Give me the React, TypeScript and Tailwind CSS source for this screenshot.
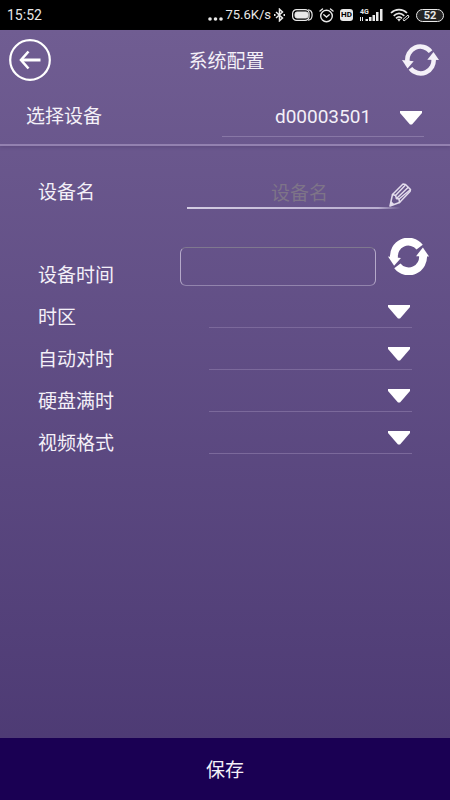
import { useState } from "react";

const settings = [
  { id: "timezone", label: "时区" },
  { id: "auto-sync", label: "自动对时" },
  { id: "disk-full", label: "硬盘满时" },
  { id: "video-format", label: "视频格式" },
];

function RefreshIcon({ className, weight }: { className: string; weight: number }) {
  return (
    <svg viewBox="0 0 114 98" className={className} aria-hidden="true">
      <g fill="none" stroke="currentColor" strokeWidth={weight}>
        <path d="M17 54A40 40 0 0 1 88 23" />
        <path d="M97 44A40 40 0 0 1 26 75" />
      </g>
      <path d="M0 49L36 53L17 75Z" fill="currentColor" />
      <path d="M114 49L78 48L97 24Z" fill="currentColor" />
    </svg>
  );
}

function Caret() {
  return (
    <svg viewBox="0 0 22 14" className="pointer-events-none col-start-1 row-start-1 mr-0.5 h-3.5 w-[22px] self-center justify-self-end" aria-hidden="true">
      <path d="M0 0H22V2L12 13.5H10L0 2Z" fill="#fff" />
    </svg>
  );
}

function PencilIcon() {
  return (
    <svg viewBox="0 0 24 24" className="pointer-events-none col-start-1 row-start-1 size-6 self-end justify-self-end" aria-hidden="true">
      <g fill="none" stroke="#e3dcec" strokeWidth="1.5" strokeLinejoin="round" strokeLinecap="round">
        <path d="M2 23L4.500 11.500L15 1L17.500 1.500L22.500 6.500L22 8.500L11.500 19.500L2 23Z" />
        <path d="M4.500 11.500L7.500 12.500L8.500 15.500L11 16L11.500 19.500" />
        <path d="M7.500 12.500L17 2.500M8.500 15.500L20 4.500M11 16L22 7" />
      </g>
      <path d="M2 23L3 18L6.500 21.300Z" fill="#e3dcec" />
    </svg>
  );
}

function StatusBar() {
  return (
    <div className="flex h-[30px] items-center justify-between bg-black pl-[7px] pr-1.5 font-[Roboto,sans-serif] text-[#e8e8e8]">
      <span className="text-sm">15:52</span>
      <div className="flex items-center gap-1.5">
        <div className="flex items-center gap-0.5">
          <svg viewBox="0 0 15 14" className="h-3.5 w-[15px]" fill="currentColor" aria-hidden="true">
            <circle cx="2" cy="11" r="1.800" />
            <circle cx="7.500" cy="11" r="1.800" />
            <circle cx="13" cy="11" r="1.800" />
          </svg>
          <span className="text-[13px]">75.6K/s</span>
          <svg viewBox="0 0 13 14" className="h-3.5 w-[13px]" fill="none" stroke="currentColor" strokeWidth="1.5" aria-hidden="true">
            <path d="M3 4L9.500 10L6.500 12.800V1.200L9.500 4L3 10" />
            <path d="M1 7H2.500M10.500 7H12" strokeWidth="2" />
          </svg>
        </div>
        <svg viewBox="0 0 21 12" className="h-3 w-[21px]" fill="none" stroke="currentColor" aria-hidden="true">
          <rect x="0.600" y="0.600" width="16.500" height="10.800" rx="4" strokeWidth="1.200" />
          <rect x="3" y="3" width="13" height="6" rx="2" fill="currentColor" />
          <path d="M16 0.800C21.500 1 21.500 11 16 11.200" strokeWidth="1.200" />
        </svg>
        <svg viewBox="0 0 15 15" className="size-[15px]" fill="none" stroke="currentColor" strokeWidth="1.4" strokeLinecap="round" aria-hidden="true">
          <circle cx="7.500" cy="8" r="5.800" />
          <path d="M4.800 6.800L7.500 9L10.200 6.800M1 3L3.500 1M14 3L11.500 1" />
        </svg>
        <span className="flex h-3 w-[13px] items-center justify-center rounded-[3px] bg-[#e8e8e8] text-[8px] font-bold text-black">HD</span>
        <svg viewBox="0 0 25 14" className="h-3.5 w-[25px]" fill="currentColor" aria-hidden="true">
          <text x="1" y="5.500" fontSize="7" fontWeight="700">4G</text>
          <path d="M1 9H2V13H1ZM3 9H4V13H3ZM6.500 11H9V13H6.500ZM10 9H12.500V13H10ZM13.500 7H16V13H13.500ZM17 4H19.500V13H17ZM21 1H23.500V13H21Z" />
        </svg>
        <svg viewBox="0 0 20 14" className="h-3.5 w-5" fill="none" stroke="currentColor" strokeWidth="1.700" aria-hidden="true">
          <path d="M1 5C5.500 0.600 12.500 0.600 17 5M3.700 7.800C7 4.800 11 4.800 14.300 7.800M6 10.300C8 8.500 10 8.500 12 10.300" />
          <path d="M7.500 11H10.500L9 13.300Z" fill="currentColor" strokeWidth="0.500" />
          <path d="M13 11.500L18 7L19 9L14 13Z" strokeWidth="1" />
        </svg>
        <span className="flex h-[13px] w-7 items-center justify-center rounded-full border border-[#e8e8e8] bg-[#242424] text-[11px] font-bold leading-none">52</span>
      </div>
    </div>
  );
}

export default function App() {
  const [name, setName] = useState("");
  const [time, setTime] = useState("");

  return (
    <div className="flex min-h-screen flex-col bg-black font-['Noto_Sans_CJK_SC',sans-serif]">
      <StatusBar />

      <form
        className="flex flex-1 flex-col bg-linear-to-b from-[#705d92] to-[#4b3872] text-[19px] text-[#f4f0f8]"
        onSubmit={(e) => e.preventDefault()}
      >
        <header className="border-b-2 border-[#9381b0] shadow-[0_2px_3px_#4f3d7055]">
          <div className="flex h-[60px] items-center justify-between pl-[9px] pr-[11px]">
            <button type="button" aria-label="返回">
              <svg viewBox="0 0 42 42" className="size-[42px]" fill="none" stroke="#fff" aria-hidden="true">
                <circle cx="21" cy="21" r="19.800" strokeWidth="2.200" />
                <path d="M12 21H31.500" strokeWidth="3" />
                <path d="M19.500 12.500L12 21L19.500 29.500" strokeWidth="2.600" />
              </svg>
            </button>
            <h1>系统配置</h1>
            <button type="button" aria-label="刷新">
              <RefreshIcon className="h-8 w-[37px]" weight={14} />
            </button>
          </div>
          <div className="flex h-[54px] items-start px-[26px] pt-[9px]">
            <label htmlFor="device" className="w-[196px] leading-8">选择设备</label>
            <div className="grid flex-1">
              <select
                id="device"
                className="col-start-1 row-start-1 h-[38px] appearance-none border-b border-[#8877a6] bg-transparent font-[Roboto,sans-serif] [text-align-last:center]"
              >
                <option>d00003501</option>
              </select>
              <Caret />
            </div>
          </div>
        </header>

        <main className="flex-1 pt-[29px]">
          <div className="flex px-[38px]">
            <label htmlFor="name" className="w-[149px] leading-8">设备名</label>
            <div className="min-w-0 flex-1">
              <div className="grid">
                <input
                  id="name"
                  value={name}
                  onChange={(e) => setName(e.target.value)}
                  placeholder="设备名"
                  className="col-start-1 row-start-1 h-8 w-full bg-transparent text-center outline-none placeholder:text-[#7e7488]"
                />
                <PencilIcon />
              </div>
              <div className="h-0.5 bg-linear-to-r from-[#d3cce2] from-0% via-[#b9aed0] via-85% to-transparent to-95%" />
            </div>
          </div>

          <div className="mt-[29px] flex h-12 items-end gap-3 pl-[38px] pr-[21px]">
            <div className="flex min-w-0 flex-1 items-end">
              <label htmlFor="time" className="w-[142px] leading-6">设备时间</label>
              <input
                id="time"
                value={time}
                onChange={(e) => setTime(e.target.value)}
                className="h-[39px] w-full min-w-0 flex-1 rounded-md border border-x-[#b5a9c9] border-b-[#9284ad] border-t-[#7f788f] bg-transparent px-2 outline-none"
              />
            </div>
            <button type="button" aria-label="同步时间" className="self-start text-white">
              <RefreshIcon className="h-[37px] w-[41px]" weight={22} />
            </button>
          </div>

          {settings.map((item) => (
            <div key={item.id} className="flex h-[42px] items-end px-[38px]">
              <label htmlFor={item.id} className="w-[171px] leading-6">{item.label}</label>
              <div className="grid flex-1">
                <select
                  id={item.id}
                  className="col-start-1 row-start-1 h-8 appearance-none border-b border-[#7b699b] bg-transparent [text-align-last:center]"
                >
                  <option value="" />
                </select>
                <Caret />
              </div>
            </div>
          ))}
        </main>

        <button type="submit" className="h-[62px] bg-[#1a0053]">保存</button>
      </form>
    </div>
  );
}
